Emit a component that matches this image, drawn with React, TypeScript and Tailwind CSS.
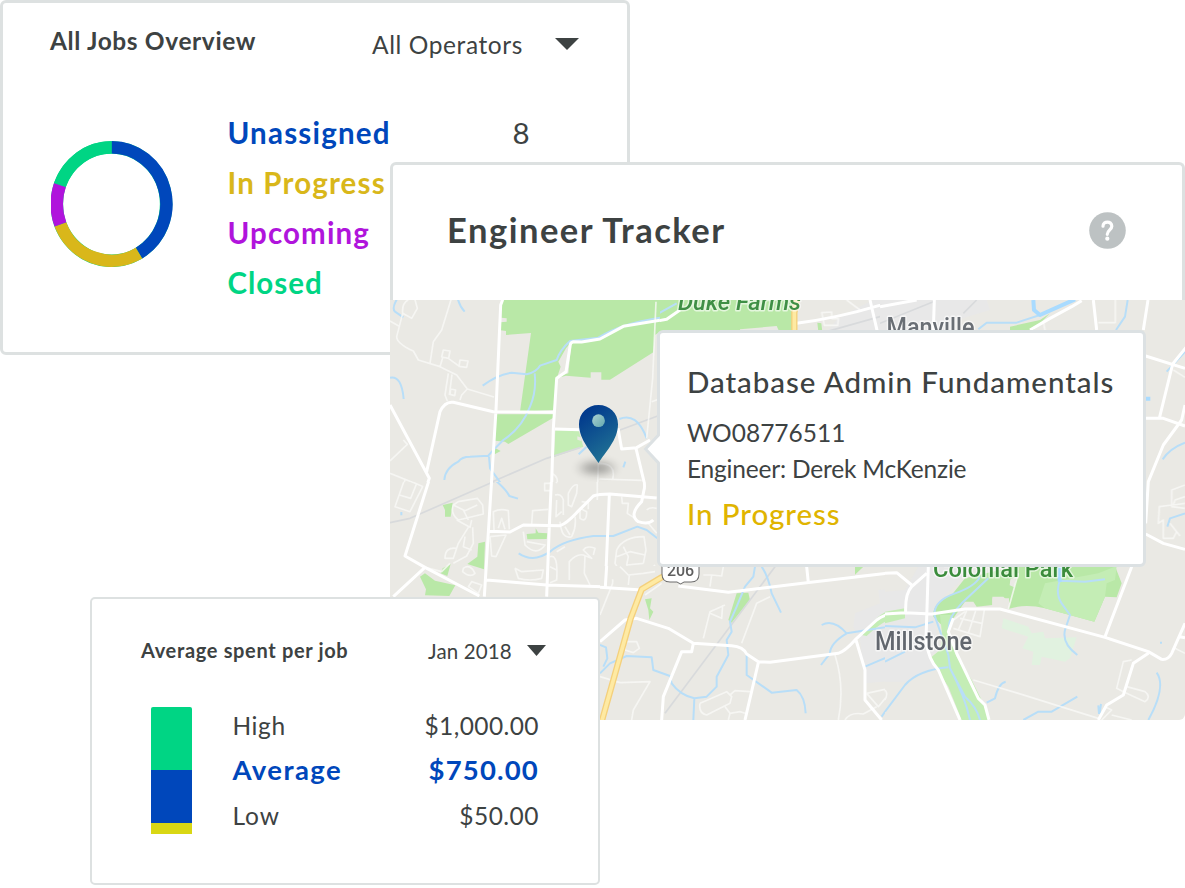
type Region = {
  x: number;
  y: number;
  clip: string;
  town?: string;
  parks?: string;
  lightParks?: string;
  mint?: string;
  land?: string;
  water?: string;
  river?: string;
  rail?: string;
  minor?: string;
  major?: string;
  highway?: string;
};

// Every region is drawn in thirds of a pixel, from its own origin.
const regions: Region[] = [
  {
    x: 390, y: 295, clip: "M0 0H810V561H0Z",
    parks: "M334 14L810 14L810 110L795 120L790 172L660 254L634 254L634 232L602 232L602 248L528 242L500 250L492 345L390 350L423 114L348 120L348 108L332 106L332 82L350 80L350 70L334 68Z M315 358L490 358L490 368L355 447L345 440L315 437Z M314 458L332 468L314 478Z",
    lightParks: "M496 406L566 406L580 455L492 486Z",
    land: "M545 140L528 160L505 200L512 215L502 245L535 235Z M562 424l12 4v10l-12-4Z",
    water: "M278 272Q320 240 365 233L410 238Q440 230 450 212L500 195Q510 165 540 138L625 128Q690 86 810 68 M434 235Q440 290 420 335Q395 400 340 435Q300 475 295 482L240 485Q215 485 205 500Q165 520 163 555 M297 485L300 520L358 600 M20 14Q5 40 15 50L40 67 M204 14Q210 35 224 50 M0 248Q35 240 41 312 M688 372Q740 350 770 430 M566 478L590 455 M700 517L706 500",
    rail: "M215 600L470 490L570 458 M690 405L805 362",
    minor: "M55 14Q35 25 38 55L65 70L82 40L75 14 M38 55L20 125Q20 145 70 168L85 195L150 215L200 240L232 282L312 306 M0 78L30 95 M183 14L155 105L130 140L120 205 M160 165L180 168L176 190L155 186Z M150 215L158 188 M175 190L205 212 M210 195L234 198L230 217L207 214Z M175 235L165 300L172 318 M186 238L178 300 M182 282L197 285L194 302L180 298Z M210 315L215 300L232 282 M0 498L52 448L40 435 M0 535L100 575 M45 555L30 600 M82 570L76 600 M798 20L788 250L770 430 M785 320L808 312 M625 505L622 600 M625 505Q680 505 668 552 M628 552L755 556 M484 535Q510 545 498 575 M465 566h18v24h-18Z M540 600Q545 570 562 572V600",
    major: "M338 14L332 30L318 345L302 600 M0 330L118 550L100 600 M110 530L150 350Q165 318 190 322L310 350L492 352 M810 76L700 94L630 132L575 141L550 140Q540 142 540 155L528 230L500 250L490 400L484 600 M495 402L570 404 M684 400L695 462L740 458L780 435 M738 460L762 560L760 600",
  },
  {
    x: 390, y: 440, clip: "M0 126H810V378H630V480H0Z",
    parks: "M158 195L188 188L182 230L165 230L165 210Z M265 310L285 305L282 388L232 372L262 350Z M410 282L437 280L437 265L445 278L472 280L470 297L412 298Z M158 385L182 372L172 408L152 400Z M90 410L105 400L135 422L196 436L178 468L105 466L108 448Z",
    water: "M305 80L315 120Q350 150 358 168L384 176 M386 340Q430 370 480 335Q520 300 610 288L670 288L742 260L770 270L802 295 M34 216v10",
    rail: "M0 248L60 235L300 130L480 55",
    minor: "M0 98L100 140 M45 115L15 200L60 215L98 140 M28 165L62 175L80 130 M190 195Q180 220 205 240L280 222L278 195L262 175L205 185Z M200 240L240 262L245 240 M190 195L225 212L262 195 M220 210L235 240 M235 262L205 310L190 355L165 355Q165 320 200 325 M248 262L250 310L230 348L190 370 M225 290L220 320L245 330 M312 270L310 215Q330 205 355 212L358 268 M325 265L335 235L345 268 M300 290L348 285L318 350L305 348L300 290 M400 275L405 315Q440 350 465 315L410 305 M425 252L428 212L475 208 M464 130h20v22h-20Z M484 105q20 10 15 25 M495 165Q515 160 520 180L520 225 M500 180L498 230L515 215 M535 195L535 160Q550 130 562 135L560 160L545 200Z M570 205L570 235Q590 250 590 215Z M575 185l20 3v20 M510 245Q515 300 545 290Q560 260 555 230 M525 260l15 25 M375 385L385 415Q420 425 455 415L460 390L395 395L375 385 M480 350Q505 340 500 420L480 428 M480 380L500 390 M500 335L525 320 M538 420L538 365Q560 340 580 345L605 355L580 330Q590 315 615 325L610 345 M585 345L583 400L600 435 M680 330Q700 290 762 290L768 330L760 370 M680 330L675 370L700 410 M680 350L720 335L765 345 M700 320L715 350L710 375L760 370 M710 375Q720 400 770 400L795 375 M735 400L750 420L790 410 M695 170L697 190L715 190L712 220L735 235 M770 210Q780 200 800 205 M775 250L800 280 M220 385Q240 370 255 400Q240 415 218 395Z M235 440L245 425L275 435L265 460Z M105 382L155 395L180 370 M622 100V180",
    major: "M309 60L302 165L283 470 M487 60L478 257L470 470 M118 118L45 348L105 382L268 468 M105 382L10 470 M298 274L360 276L400 255L510 257Q530 250 560 218L610 168Q625 162 660 162L800 174 M658 165L646 438 M738 25Q770 130 762 150L755 185Q715 225 745 245Q775 255 790 240 M290 420L470 435L640 440L756 446",
  },
  {
    x: 640, y: 290, clip: "M60 30H720V126H60Z",
    town: "M640 60L700 30H900V125H560L590 90Z",
    parks: "M0 30H470L455 125H0Z M532 98l12 2l3 25h-12Z",
    land: "M300 118L410 108L418 125H300Z",
    rail: "M560 125L720 80L900 30",
    water: "M0 92L60 68L110 40",
    minor: "M545 68l30-2v20h20l-2 20h-40Z M620 30L660 60",
    major: "M470 100Q620 80 770 30 M690 30L712 125 M0 102L80 88L120 60",
    highway: "M470 30L463 68V125",
  },
  {
    x: 880, y: 290, clip: "M0 30H915V828H790V126H0Z",
    town: "M0 30H320L330 60L230 90V125H0Z",
    parks: "M390 110L480 90L510 70L455 125L390 120Z",
    river: "M460 30L462 60L480 75L585 28 M797 326h14",
    water: "M480 75L410 98L320 98L295 118 M743 30L735 80L708 120 M915 185L860 245 M915 458Q870 475 848 508 M915 670L870 685L862 710",
    rail: "M0 100L160 35 M250 70L290 30",
    minor: "M655 98H706V30 M490 95L495 120 M880 240L915 262 M915 585L875 600V650L915 655 M915 620L885 630L880 645L915 640 M875 645L838 650L835 700L850 690V745H880L890 725L870 700 M890 725L900 738",
    major: "M450 120L510 85L575 50L605 32 M640 30L650 120 M804 30L790 120 M0 50L110 30 M163 30L160 120 M797 198L915 235 M920 170L878 222L838 385 M797 385H850L915 408 M915 345L905 390L850 465L805 575L797 700 M797 732L850 760L915 778",
  },
  {
    x: 600, y: 540, clip: "M0 78H855V540H0Z",
    town: "M900 145L835 150L840 190L765 220L760 260L780 300L795 430L900 420Z",
    parks: "M410 160L445 158L450 180L395 248L385 240Z M765 80H790L765 104Z M135 178L155 175L150 205L160 215L148 240L145 210Z",
    lightParks: "M785 285L830 235Q860 205 900 208V232Q860 230 800 288Z",
    water: "M465 80L460 110L435 140L410 200L390 245L395 275L380 300L385 345L350 410V440L320 470L283 475Q240 465 215 430L210 408L160 390L155 352L80 348L30 370L0 400 M0 315L18 322L22 355L10 380 M283 475L280 540 M485 80Q505 110 515 160L543 218 M440 345V405L515 458L590 450Q615 470 617 520 M665 255Q700 235 740 280L900 255 M740 280Q690 310 690 340L663 375 M795 380L830 365L900 335 M900 450L845 530",
    rail: "M525 80L195 520",
    minor: "M0 225L38 130V118 M0 410L60 428L150 425L100 510L95 540 M75 305H110L118 325L100 338L75 330Z M60 80L85 105L130 100L165 95 M88 105L85 135 M135 165L185 130 M330 140L335 105L365 108L370 80 M310 105H335 M310 295L330 215L375 195 M330 220L365 235L368 195 M425 310L470 190L510 170 M300 490L380 455L395 470L390 490L320 525Q295 520 300 490 M390 465L405 452L450 455 M375 500L390 520L420 515L435 520 M390 520L385 540 M705 345Q735 440 715 540 M800 460L855 448L860 470L835 500L800 460 M735 540Q750 515 790 522L830 500",
    major: "M20 78L16 140 M0 142L125 150 M0 305L75 240L110 235L205 265L280 310L395 317Q430 320 440 342L475 365L510 367L715 340Q735 335 770 295L830 240Q860 218 900 218 M280 310L275 335H245L190 470L185 540 M475 368L435 540 M235 138L385 157L620 128L885 97L900 105 M620 80L625 128 M768 300L795 390V480L845 540",
    highway: "M200 105L185 112L125 148L92 235L5 545",
  },
  {
    x: 885, y: 540, clip: "M0 78H900V540H0Z",
    town: "M0 155L60 150L100 80H250L220 130L150 190L145 230L165 330L130 350L150 385L60 425L0 425Z",
    parks: "M145 230Q140 190 200 165L240 115L395 78H690L710 130L695 172L660 170L628 245L480 205Q420 190 370 207L375 190L355 170H322V195L275 200L265 185L240 185L205 235L190 275Z",
    lightParks: "M480 130L640 100L695 78L690 120L665 130L660 170L628 245L480 205L460 190Z M165 225L205 225L190 275L215 350L260 420L290 480L315 540H230L190 440L135 355L165 330L172 290Z M0 215L60 205V235L0 250Z",
    land: "M376 118l18-8l-6 32l-14 -6Z M322 175h50v22h-50Z",
    mint: "M355 235L430 260L440 280L475 275L480 295L575 292L555 355L540 365L470 350L465 375H440L445 335L412 325L430 290L350 265Z",
    river: "M524 80V125",
    water: "M285 110Q270 140 210 160Q140 185 150 230L190 345L195 385Q240 470 255 540 M310 115L230 190Q185 235 192 275 M195 385L240 470Q275 500 285 540 M190 382Q100 390 60 435L0 515 M0 258L90 262L145 245 M0 365L60 335 M525 120Q510 160 530 190L555 225L540 270Q530 310 577 345 M525 122L600 125L660 118 M305 488L330 475Q340 430 362 425 M415 540L460 515H500L577 470 M815 398Q845 440 790 540 M640 496L642 522 M648 492L644 520 M828 305v6",
    minor: "M400 100L370 207 M205 240L240 215 M205 265L285 290L298 210 M220 270L245 212 M250 280L272 212 M225 235L290 250 M265 420L400 460L640 535 M740 360L715 365L695 445L715 455L780 485Q800 470 780 455L725 440 M650 540L680 510L660 500 M680 525L740 540 M870 325L900 340 M0 450q10 10 0 30",
    major: "M0 222L60 218L140 222L240 207H345L660 292L790 335L830 358Q850 360 860 340L900 250 M62 218Q60 160 80 140L125 100 M0 100L35 98L80 135 M130 78L123 300Q130 360 160 390L225 540 M740 80L660 290 M205 235L190 275L215 340L280 475L300 495L312 540 M790 340L745 370L715 465L665 495L640 540 M885 290L900 293",
  },
];

function MapLayer({
  pick,
  fill = "none",
  stroke = "none",
  width = 0,
  opacity = 1,
}: {
  pick: keyof Region;
  fill?: string;
  stroke?: string;
  width?: number;
  opacity?: number;
}) {
  return (
    <g fill={fill} stroke={stroke} strokeWidth={width} opacity={opacity} strokeLinejoin="round">
      {regions.map((r, i) =>
        r[pick] ? (
          <g key={i} transform={`translate(${r.x} ${r.y}) scale(0.33333)`}>
            <path d={r[pick] as string} clipPath={`url(#region-${i})`} />
          </g>
        ) : null,
      )}
    </g>
  );
}

function StreetMap() {
  return (
    <svg viewBox="390 300 795 420" className="block h-[420px] w-[795px] rounded-br-md" aria-hidden="true">
      <defs>
        {regions.map((r, i) => (
          <clipPath key={i} id={`region-${i}`}>
            <path d={r.clip} />
          </clipPath>
        ))}
        <linearGradient id="pin" x1="0.2" y1="0" x2="0.7" y2="1">
          <stop offset="0.1" stopColor="#023b8d" />
          <stop offset="1" stopColor="#227595" />
        </linearGradient>
        <linearGradient id="pin-dot" x1="0" y1="0" x2="1" y2="1">
          <stop offset="0" stopColor="#abd0d2" />
          <stop offset="1" stopColor="#64a9ae" />
        </linearGradient>
        <filter id="soft" x="-60%" y="-200%" width="220%" height="500%">
          <feGaussianBlur stdDeviation="6 4" />
        </filter>
      </defs>
      <rect x="390" y="300" width="795" height="420" fill="#eae9e4" />
      <MapLayer pick="town" fill="#e8e8e8" />
      <MapLayer pick="parks" fill="#b9e8a7" />
      <MapLayer pick="lightParks" fill="#c4edb5" />
      <MapLayer pick="mint" fill="#e1f2e0" />
      <MapLayer pick="land" fill="#eae9e4" />
      <MapLayer pick="rail" stroke="#d8dadc" width={5} />
      <MapLayer pick="water" stroke="#b8def8" width={6} />
      <MapLayer pick="river" stroke="#a9dbff" width={12} />
      <MapLayer pick="minor" stroke="#f9f9f7" width={5} opacity={0.8} />
      <MapLayer pick="major" stroke="#ffffff" width={9} />
      <MapLayer pick="highway" stroke="#f4d07c" width={19} />
      <MapLayer pick="highway" stroke="#feeaa3" width={11} />

      <g fontFamily="Roboto, sans-serif" strokeLinejoin="round" className="[paint-order:stroke]">
        <g stroke="#ffffff" strokeOpacity="0.6" strokeWidth="3">
          <text x="678" y="310" fontSize="24" fontStyle="italic" fontWeight="500" fill="#3f8f45" textLength="123" lengthAdjust="spacingAndGlyphs">Duke Farms</text>
          <text x="886.5" y="335.500" fontSize="25" fontWeight="500" fill="#6a6f75" textLength="88" lengthAdjust="spacingAndGlyphs">Manville</text>
          <text x="875" y="649.5" fontSize="25" fontWeight="500" fill="#62676e" textLength="97" lengthAdjust="spacingAndGlyphs">Millstone</text>
          <text x="933" y="577" fontSize="24" fontWeight="500" fill="#3b8c3c" textLength="140" lengthAdjust="spacingAndGlyphs">Colonial Park</text>
        </g>
        <path d="M671 558H691Q698.500 558 698.500 566V574Q698.500 581.500 691 581.500H684L680.500 583.500L677 581.500H670Q662.500 581.500 662.500 574V566Q662.500 558 671 558Z" fill="#fff" stroke="#6c6c6c" strokeWidth="2" />
        <text x="667" y="576" fontSize="16" fontWeight="500" fill="#5f5f5f" textLength="27">206</text>
      </g>

      <ellipse cx="597" cy="468" rx="16" ry="6" fill="#000" opacity="0.32" filter="url(#soft)" />
      <path d="M598.500 463C592 452.500 579 440 579 424.300C579 413 587.500 405 598.500 405S618 413 618 424.300C618 440 605 452.500 598.500 463Z" fill="url(#pin)" />
      <circle cx="598.500" cy="420.700" r="6.400" fill="url(#pin-dot)" />
    </svg>
  );
}

const slices = [
  { from: 0, to: 150, color: "#0047bb" },
  { from: 150, to: 249, color: "#d9b71a" },
  { from: 249, to: 289.5, color: "#b014dc" },
  { from: 289.5, to: 360, color: "#00d584" },
];

function point(deg: number) {
  const a = (deg * Math.PI) / 180;
  return `${(60.6 + 54.8 * Math.sin(a)).toFixed(2)} ${(63 - 56.7 * Math.cos(a)).toFixed(2)}`;
}

function Donut() {
  return (
    <svg viewBox="0 0 122 126" className="h-[126px] w-[122px]" fill="none" strokeWidth="12.500" aria-hidden="true">
      <ellipse cx="60.500" cy="63.100" rx="54.600" ry="56.700" stroke="#00d584" />
      {slices.map((s) => (
        <path key={s.from} d={`M${point(s.from)}A54.8 56.7 0 0 1 ${point(s.to)}`} stroke={s.color} />
      ))}
    </svg>
  );
}

function Caret({ className }: { className: string }) {
  return (
    <svg viewBox="0 0 24 12" preserveAspectRatio="none" className={className} aria-hidden="true">
      <path d="M0 0H24L12 12Z" fill="#3d4242" />
    </svg>
  );
}

export default function App() {
  return (
    <main className="relative h-[888px] w-[1185px] overflow-hidden bg-white font-['Lato',sans-serif] text-[#3d4242]">
      <section className="absolute top-0 left-0 h-[355px] w-[630px] rounded-md border-[3px] border-[#dde1e1] bg-white pl-[47px]">
        <header className="flex items-start">
          <h2 className="mt-[26px] w-[322px] text-[24.5px] leading-6 font-bold tracking-[0.62px] whitespace-nowrap">All Jobs Overview</h2>
          <button className="mt-[30px] flex gap-8 text-[24.5px] leading-6 tracking-[0.6px] whitespace-nowrap">
            All Operators
            <Caret className="mt-[5px] h-3 w-6" />
          </button>
        </header>
        <div className="mt-[50px] flex">
          <div className="mt-[34px] w-[177.5px] pl-px"><Donut /></div>
          <ul className="w-[302px] pt-[0.5px] text-[29.5px] leading-[50.3px] font-bold">
            <li className="flex justify-between tracking-[1.2px] text-[#0047bb]">Unassigned<span className="font-normal tracking-normal text-[#3d4242]">8</span></li>
            <li className="tracking-[1.15px] text-[#d9b71a]">In Progress</li>
            <li className="tracking-[1.12px] text-[#b014dc]">Upcoming</li>
            <li className="tracking-[1px] text-[#00d584]">Closed</li>
          </ul>
        </div>
      </section>

      <section className="absolute top-[162px] left-[390px] w-[795px]">
        <header className="flex h-[138px] items-center justify-between rounded-t-md border-x-[3px] border-t-[3px] border-[#dde1e1] bg-white pr-[56px] pl-[54px]">
          <h2 className="pb-[5px] text-[34.5px] leading-9 font-bold tracking-[1.51px]">Engineer Tracker</h2>
          <svg viewBox="0 0 37 37" className="mb-[5px] h-[37px] w-[37px]" aria-hidden="true">
            <circle cx="18.500" cy="18.500" r="18.300" fill="#bdc2c3" />
            <path d="M14 14.200C14 8.600 22.800 8.700 22.800 14.200C22.800 17.800 18.400 17.900 18.300 22.300" fill="none" stroke="#fff" strokeWidth="3.200" strokeLinecap="round" />
            <circle cx="18.300" cy="26.700" r="2.100" fill="#fff" />
          </svg>
        </header>
        <StreetMap />
        <article className="absolute top-[168px] left-[267px] h-[237px] w-[489px] rounded-md border-[3px] border-[#dce1e3] bg-white pt-[31px] pl-[27px] whitespace-nowrap">
          <svg viewBox="0 0 18 32" className="absolute top-[100px] -left-[17px] h-8 w-[18px]" aria-hidden="true">
            <path d="M18 1.500L3.500 16L18 30.500Z" fill="#fff" />
            <path d="M15.500 2L2.500 16L15.500 30" fill="none" stroke="#dce1e3" strokeWidth="3" />
          </svg>
          <h3 className="text-[29.5px] leading-9 font-medium tracking-[0.95px]">Database Admin Fundamentals</h3>
          <p className="mt-[15px] text-[24.5px] leading-9">WO08776511</p>
          <p className="text-[24.5px] leading-9 tracking-[-0.2px]">Engineer: Derek McKenzie</p>
          <p className="mt-[9px] text-[29.5px] leading-9 font-medium tracking-[0.9px] text-[#e0b400]">In Progress</p>
        </article>
      </section>

      <section className="absolute top-[597px] left-[90px] h-[288px] w-[510px] rounded-[5px] border-2 border-[#dde1e1] bg-white pl-[49px]">
        <header className="flex items-start">
          <h2 className="mt-[41px] w-[287px] text-[20px] leading-5 font-bold tracking-[0.66px]">Average spent per job</h2>
          <button className="mt-[42px] flex w-[118px] justify-between text-[20.5px] leading-5 tracking-[0.15px] whitespace-nowrap">
            Jan 2018
            <Caret className="mt-1 h-[11px] w-[19px]" />
          </button>
        </header>
        <div className="mt-[42px] flex pl-[10px]">
          <div className="mt-[4px] flex h-[127px] w-[41px] flex-col overflow-hidden rounded-t-[2px]">
            <span className="h-[63px] bg-[#00d584]" />
            <span className="h-[53px] bg-[#0047bb]" />
            <span className="flex-1 bg-[#d9d714]" />
          </div>
          <dl className="ml-[40.5px] grid w-[306.5px] grid-cols-2 text-[24.5px] leading-[45px]">
            <dt className="tracking-[0.6px]">High</dt>
            <dd className="text-right tracking-[0.42px]">$1,000.00</dd>
            <dt className="-mt-px mb-px text-[27.5px] font-bold tracking-[1.4px] text-[#0047bb]">Average</dt>
            <dd className="-mt-px mb-px text-right text-[27.5px] font-bold tracking-[1.18px] text-[#0047bb]">$750.00</dd>
            <dt className="tracking-[0.9px]">Low</dt>
            <dd className="text-right tracking-[0.48px]">$50.00</dd>
          </dl>
        </div>
      </section>
    </main>
  );
}
